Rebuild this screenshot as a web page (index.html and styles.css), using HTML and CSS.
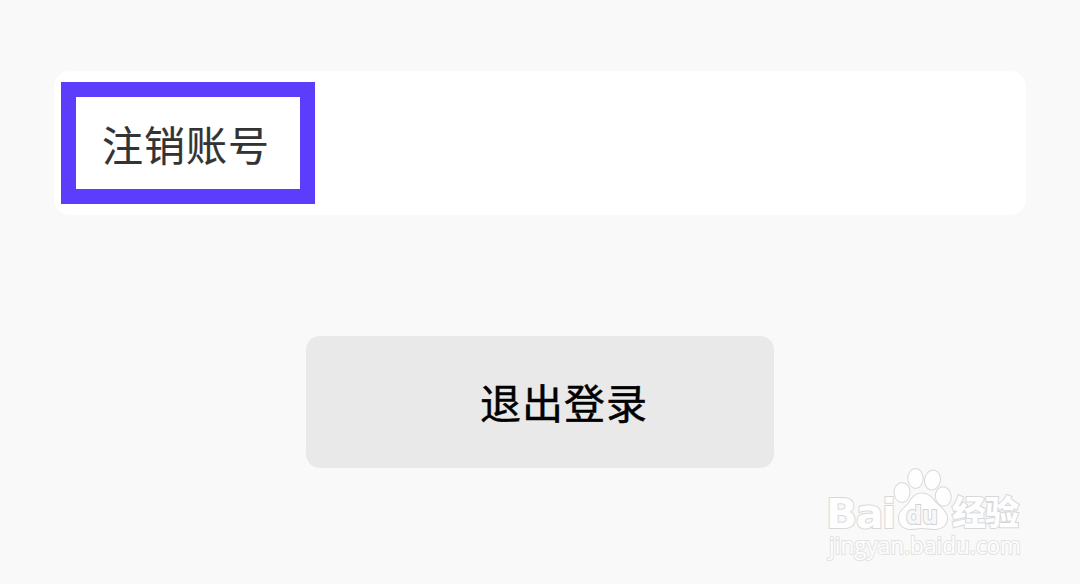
FILE: index.html
```
<!doctype html>
<html lang="zh-CN">
  <head>
    <meta charset="UTF-8" />
    <meta name="viewport" content="width=device-width, initial-scale=1.0" />
    <title>账号设置</title>
    <link rel="stylesheet" href="styles.css">
  </head>
  <body>
    <main class="page">
      <div class="card">
        <a class="cancel-account">注销账号</a>
      </div>

      <button class="logout" type="button">退出登录</button>
    </main>

    <svg class="watermark" viewBox="0 0 210 110" aria-label="Baidu经验">
      <g class="mark">
        <text class="brand" x="6" y="68">Bai</text>
        <ellipse cx="82" cy="32.5" rx="7.5" ry="9.5" />
        <ellipse cx="95.500" cy="18.5" rx="7.2" ry="9.5" />
        <ellipse cx="112.500" cy="20" rx="7.4" ry="9.5" transform="rotate(12 112.500 20)" />
        <ellipse cx="123.300" cy="36.500" rx="7.4" ry="9.2" transform="rotate(-8 123.300 36.500)" />
        <path d="M102 33.500c-7 0-10 5-13 9.500-4 5-10 8-10 15 0 7 5 11 11 11 5 0 8-1 12-1s8 1 13 1c7 0 12-4 12-11 0-6-6-10-11-15-4-5-7-9.500-14-9.500z" />
        <text class="brand-cn" x="132" y="65" textLength="67">经验</text>
        <text class="site" x="9" y="94" textLength="192" lengthAdjust="spacingAndGlyphs">jingyan.baidu.com</text>
      </g>
      <text class="du" x="86" y="63.500" textLength="32" lengthAdjust="spacingAndGlyphs">du</text>
    </svg>
  </body>
</html>
```
FILE: styles.css
```
body {
  margin: 0;
  background: #f9f9f9;
  font-family: "Noto Sans CJK SC", sans-serif;
  overflow: hidden;
}
.page {
  box-sizing: border-box;
  height: 584px;
  padding: 71px 54px 0;
  display: flex;
  flex-direction: column;
}
.card {
  box-sizing: border-box;
  width: 972px;
  height: 144px;
  padding: 11px 7px;
  background: #fff;
  border-radius: 16px;
}
.cancel-account {
  box-sizing: border-box;
  display: block;
  width: 254px;
  height: 122px;
  padding-left: 26px;
  border: 15px solid #5c3dfc;
  color: #333;
  font-size: 41px;
  letter-spacing: 1px;
  line-height: 92px;
  white-space: nowrap;
  -webkit-text-stroke: 0.2px #333;
}
.logout {
  align-self: center;
  width: 468px;
  height: 132px;
  margin-top: 121px;
  padding: 0 0 2px 48px;
  border: none;
  border-radius: 14px;
  background: #e9e9e9;
  color: #000;
  font-family: inherit;
  font-size: 41px;
  letter-spacing: 1px;
  line-height: 130px;
  -webkit-text-stroke: 0.5px #000;
}
.watermark {
  position: absolute;
  left: 820px;
  top: 460px;
  width: 210px;
  height: 110px;
}
.mark {
  fill: #fefefe;
  stroke: #d8d8d8;
  stroke-width: 2px;
  paint-order: stroke;
}
.brand {
  font: bold 41px "DejaVu Sans", sans-serif;
  letter-spacing: -1.5px;
}
.brand-cn {
  font: 900 34px "Noto Sans CJK SC", sans-serif;
}
.site {
  font: 23px "Open Sans", sans-serif;
  stroke: #e2e2e2;
}
.du {
  font: bold 25px "DejaVu Sans", sans-serif;
  fill: #f7f7f7;
  stroke: #d2d2d2;
  stroke-width: 2px;
  paint-order: stroke;
}
```
